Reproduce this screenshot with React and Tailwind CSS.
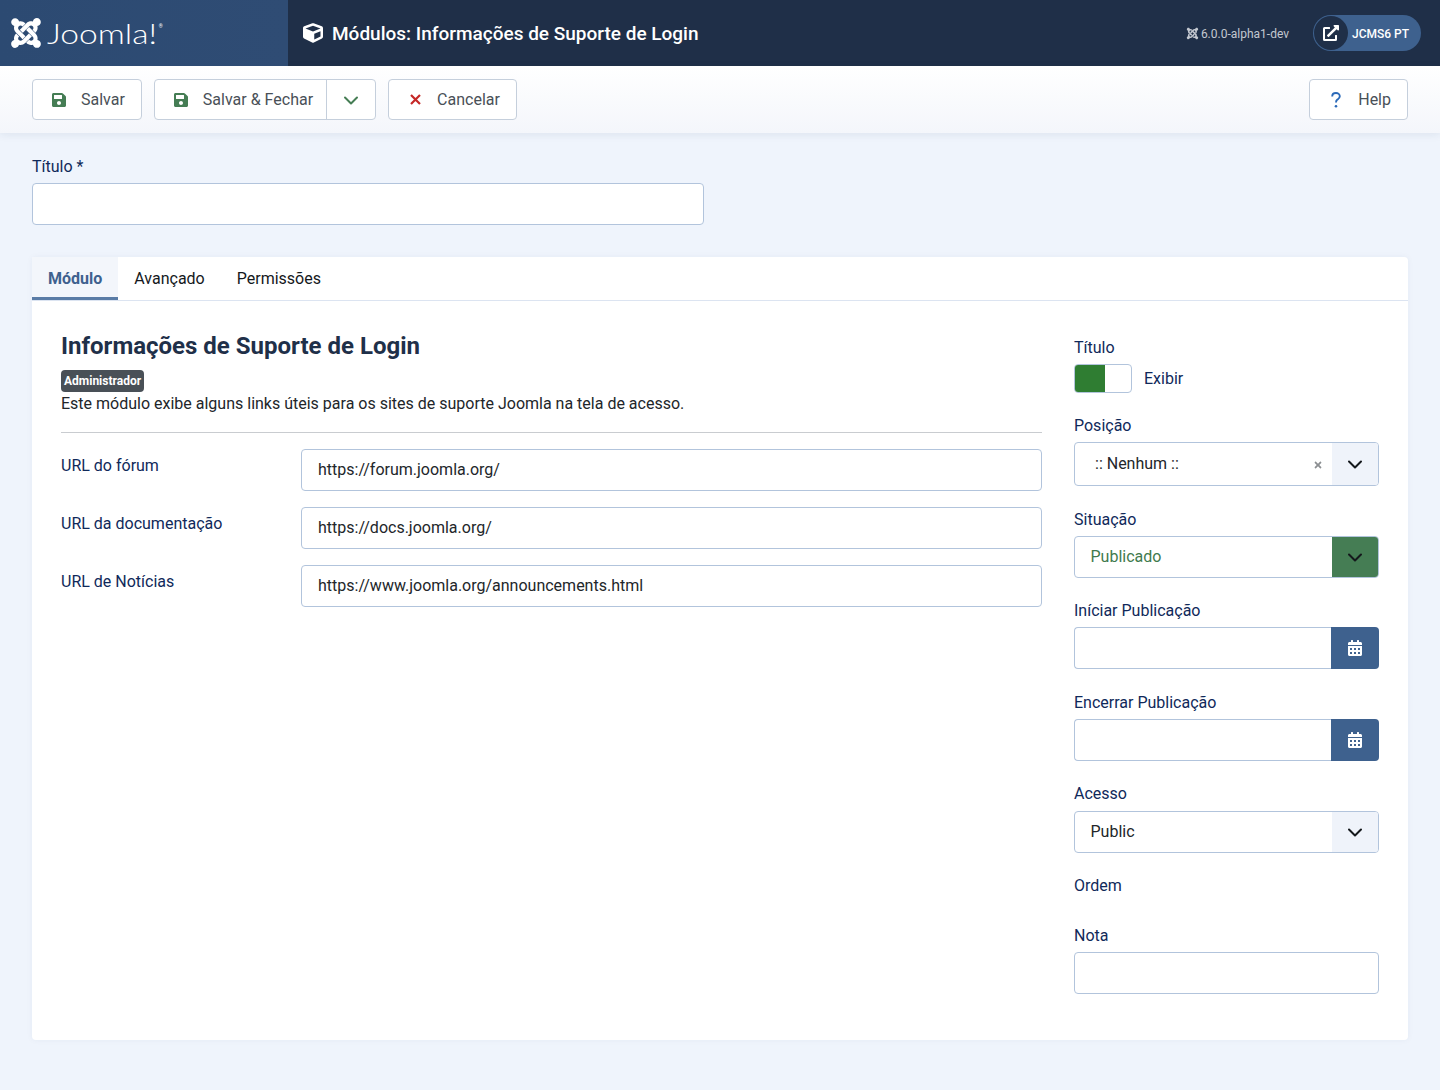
import React from "react";
import { FaJoomla, FaCube, FaSave, FaTimes, FaCalendarAlt, FaExternalLinkAlt } from "react-icons/fa";

function Chevron({ className = "" }) {
  return (
    <svg width="16" height="16" viewBox="0 0 16 16" fill="none" stroke="currentColor" strokeWidth="2" strokeLinecap="round" strokeLinejoin="round" className={className}>
      <path d="M2 5.5l6 6 6-6" />
    </svg>
  );
}

function CrossIcon({ className = "" }) {
  return (
    <svg width="11" height="11" viewBox="0 0 11 11" fill="none" stroke="currentColor" strokeWidth="2.2" className={className}>
      <path d="M1 1l9 9M10 1l-9 9" />
    </svg>
  );
}

function QuestionIcon({ className = "" }) {
  return (
    <svg width="10" height="16" viewBox="0 0 10 16" fill="none" className={className}>
      <path d="M1.2 4.4C1.2 2.4 2.9 1 5 1c2.1 0 3.8 1.4 3.8 3.3 0 1.7-1.3 2.5-2.4 3.3-.8.6-1.4 1.1-1.4 2.9" stroke="currentColor" strokeWidth="1.9" />
      <circle cx="5" cy="14.2" r="1.3" fill="currentColor" />
    </svg>
  );
}

function ToolButton({ icon, label, pad = "pl-[18px] pr-4", gap = "gap-[14px]" }) {
  return (
    <button className={`flex h-[41px] items-center ${gap} rounded border border-[#c5cfdc] bg-white ${pad} text-[16px] text-[#495057]`}>
      {icon}
      <span>{label}</span>
    </button>
  );
}

function Label({ children, className = "" }) {
  return <div className={`h-6 pt-px text-[16px] leading-6 text-[#10295a] ${className}`}>{children}</div>;
}

function SideInput({ className = "" }) {
  return <div className={`h-[42px] rounded border border-[#b2c4dc] bg-white ${className}`} />;
}

function DateField() {
  return (
    <div className="flex h-[42px]">
      <div className="min-w-0 flex-1 rounded-l border border-r-0 border-[#b2c4dc] bg-white" />
      <div className="flex w-12 items-center justify-center rounded-r bg-[#3e618e] text-white">
        <FaCalendarAlt size={16} />
      </div>
    </div>
  );
}

function SelectField({ value, box = "bg-[#eff3fa]", text = "text-[#22262a]" }) {
  return (
    <div className="flex h-[42px] overflow-hidden rounded border border-[#b2c4dc] bg-white">
      <div className={`flex flex-1 items-center pl-[15.5px] text-[16px] ${text}`}>{value}</div>
      <div className={`flex w-[46px] items-center justify-center ${box} text-[#14181c]`}>
        <Chevron />
      </div>
    </div>
  );
}

function UrlRow({ label, value }) {
  return (
    <div className="mb-4 flex">
      <div className="w-[240px] shrink-0 pt-[5px] text-[16px] leading-6 text-[#10295a]">{label}</div>
      <div className="flex h-[42px] flex-1 items-center rounded border border-[#b2c4dc] bg-white px-4 text-[16px] text-[#22262a]">
        {value}
      </div>
    </div>
  );
}

export default function App() {
  return (
    <div className="min-h-[1090px] bg-[#eff4fc] font-['Roboto',sans-serif]">
      <header className="flex h-[66px] items-center bg-[#1f2f48] text-white">
        <div className="flex h-full w-[288px] shrink-0 items-center bg-gradient-to-r from-[#2c4a72] to-[#2f4c74] pl-[9px]">
          <FaJoomla size={34} />
          <span className="ml-[4px] origin-left scale-x-[1.2] font-['Lato',sans-serif] text-[28px] font-light leading-none">
            Joomla!
          </span>
          <span className="ml-[20px] mb-[14px] text-[5px] leading-none">®</span>
        </div>
        <div className="flex flex-1 items-center gap-[9px] pl-[15px]">
          <FaCube size={20} />
          <h1 className="text-[19px] font-medium leading-none">Módulos: Informações de Suporte de Login</h1>
        </div>
        <div className="mr-[24px] flex items-center gap-[2px] pt-px text-[12px] text-[#c3c8d0]">
          <FaJoomla size={13} />
          <span>6.0.0-alpha1-dev</span>
        </div>
        <div className="mr-[19px] flex h-9 w-[108px] items-center rounded-full bg-[#3e618e] pl-[1px]">
          <div className="flex h-[34px] w-[34px] items-center justify-center rounded-full bg-[#1f2f48]">
            <FaExternalLinkAlt size={16} />
          </div>
          <span className="ml-[4px] pt-px text-[12px] font-medium">JCMS6 PT</span>
        </div>
      </header>

      <div className="flex h-[67px] items-center justify-between bg-gradient-to-b from-white to-[#f4f6fb] px-8 shadow-[0_2px_8px_rgba(30,50,90,0.08)]">
        <div className="flex items-center gap-3">
          <ToolButton icon={<FaSave size={16} className="text-[#457d54]" />} label="Salvar" />
          <div className="flex h-[41px] rounded border border-[#c5cfdc] bg-white text-[16px] text-[#495057]">
            <div className="flex items-center gap-[14px] pl-[18px] pr-[13px]">
              <FaSave size={16} className="text-[#457d54]" />
              <span>Salvar &amp; Fechar</span>
            </div>
            <div className="flex w-[49px] items-center justify-center border-l border-[#c5cfdc] text-[#457d54]">
              <Chevron />
            </div>
          </div>
          <ToolButton icon={<CrossIcon className="text-[#c52827]" />} label="Cancelar" pad="pl-[21px] pr-4" gap="gap-[16px]" />
        </div>
        <ToolButton icon={<QuestionIcon className="text-[#2a69b8]" />} label="Help" pad="pl-[21px] pr-4" gap="gap-[17px]" />
      </div>

      <div className="px-8 pt-[21px]">
        <Label>Título *</Label>
        <SideInput className="mt-[5px] w-[672px]" />

        <div className="mt-8 h-[783px] rounded bg-white shadow-[0_0_6px_rgba(30,50,90,0.05)]">
          <div className="flex h-[44px] border-b border-[#dce4f1] text-[16px] text-[#14181c]">
            <div className="flex h-[43px] items-center border-b-[3px] border-[#5a7ca6] bg-[#f3f6fb] px-4 pt-[3px] font-bold text-[#3e618e]">
              Módulo
            </div>
            <div className="flex h-[43px] items-center px-4">Avançado</div>
            <div className="flex h-[43px] items-center px-4">Permissões</div>
          </div>

          <div className="flex gap-8 px-[29px]">
            <div className="min-w-0 flex-1">
              <h2 className="mt-[28px] text-[24px] font-bold leading-[34px] text-[#1f3049]">
                Informações de Suporte de Login
              </h2>
              <div className="mt-[7px] flex">
                <span className="flex h-[22px] items-center rounded bg-[#495057] px-[3px] text-[12px] font-bold text-white">
                  Administrador
                </span>
              </div>
              <p className="text-[16px] leading-[24px] text-[#22262a]">
                Este módulo exibe alguns links úteis para os sites de suporte Joomla na tela de acesso.
              </p>
              <div className="mb-4 mt-[16px] h-px bg-[#c9ccd0]" />
              <UrlRow label="URL do fórum" value="https://forum.joomla.org/" />
              <UrlRow label="URL da documentação" value="https://docs.joomla.org/" />
              <UrlRow label="URL de Notícias" value="https://www.joomla.org/announcements.html" />
            </div>

            <div className="w-[305px] shrink-0 pt-[34px]">
              <Label className="mb-[5px]">Título</Label>
              <div className="mb-5 flex h-[29px] items-center gap-3">
                <div className="flex h-[29px] w-[58px] overflow-hidden rounded border border-[#b2c4dc] bg-white">
                  <div className="w-[30px] bg-[#2f7d32]" />
                </div>
                <span className="text-[16px] text-[#10295a]">Exibir</span>
              </div>

              <Label className="mb-[5px]">Posição</Label>
              <div className="mb-[21px]">
                <div className="flex h-[44px] overflow-hidden rounded border border-[#b2c4dc] bg-white">
                  <div className="flex flex-1 items-center justify-between pb-[1px] pl-5 pr-[9px] text-[16px] text-[#22262a]">
                    <span>:: Nenhum ::</span>
                    <FaTimes size={10} className="mt-[3px] text-[#8c8f92]" />
                  </div>
                  <div className="flex w-[46px] items-center justify-center bg-[#eff3fa] text-[#14181c]">
                    <Chevron />
                  </div>
                </div>
              </div>

              <Label className="mb-[5px]">Situação</Label>
              <div className="mb-5">
                <SelectField value="Publicado" box="bg-[#457d54]" text="text-[#3f7a4e]" />
              </div>

              <Label className="mb-[5px]">Iníciar Publicação</Label>
              <div className="mb-[21px]"><DateField /></div>

              <Label className="mb-[5px]">Encerrar Publicação</Label>
              <div className="mb-5"><DateField /></div>

              <Label className="mb-[6px]">Acesso</Label>
              <div className="mb-5"><SelectField value="Public" /></div>

              <Label className="mb-[26px]">Ordem</Label>

              <Label className="mb-[5px]">Nota</Label>
              <SideInput />
            </div>
          </div>
        </div>
      </div>
    </div>
  );
}
